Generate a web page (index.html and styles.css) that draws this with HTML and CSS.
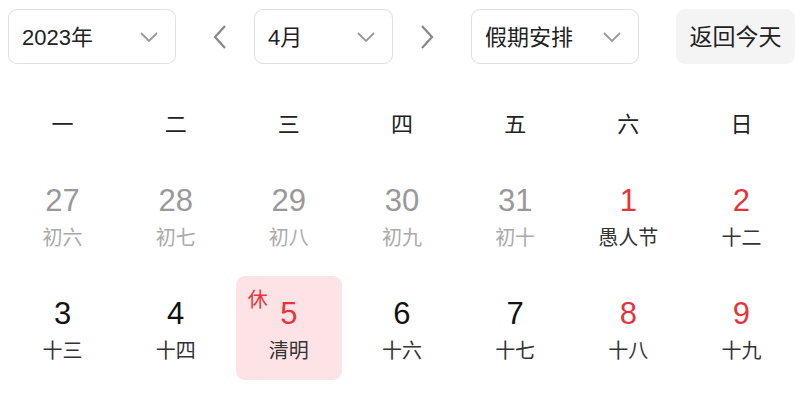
FILE: index.html
```html
<!DOCTYPE html>
<html lang="zh-CN">
<head>
    <meta charset="UTF-8">
    <meta name="viewport" content="width=device-width, initial-scale=1.0">
    <title>日历</title>
    <link rel="stylesheet" href="styles.css">
</head>
<body>

    <div class="toolbar">
        <div class="select select-year">
            <span>2023年</span>
            <svg class="chev" width="20" height="12" viewBox="0 0 20 12"><path d="M2 2 L10 10 L18 2" fill="none" stroke="#999" stroke-width="1.8"/></svg>
        </div>
        <div class="arrow arrow-prev">
            <svg width="16" height="26" viewBox="0 0 16 26"><path d="M13 2 L3 13 L13 24" fill="none" stroke="#888" stroke-width="2.2"/></svg>
        </div>
        <div class="select select-month">
            <span>4月</span>
            <svg class="chev" width="20" height="12" viewBox="0 0 20 12"><path d="M2 2 L10 10 L18 2" fill="none" stroke="#999" stroke-width="1.8"/></svg>
        </div>
        <div class="arrow arrow-next">
            <svg width="16" height="26" viewBox="0 0 16 26"><path d="M3 2 L13 13 L3 24" fill="none" stroke="#888" stroke-width="2.2"/></svg>
        </div>
        <div class="select select-holiday">
            <span>假期安排</span>
            <svg class="chev" width="20" height="12" viewBox="0 0 20 12"><path d="M2 2 L10 10 L18 2" fill="none" stroke="#999" stroke-width="1.8"/></svg>
        </div>
        <button class="today">返回今天</button>
    </div>

    <!-- 星期 -->
    <div class="week">
        <div>一</div><div>二</div><div>三</div><div>四</div><div>五</div><div>六</div><div>日</div>
    </div>

    <div class="days">
        <div class="day other"><div class="num">27</div><div class="lunar">初六</div></div>
        <div class="day other"><div class="num">28</div><div class="lunar">初七</div></div>
        <div class="day other"><div class="num">29</div><div class="lunar">初八</div></div>
        <div class="day other"><div class="num">30</div><div class="lunar">初九</div></div>
        <div class="day other"><div class="num">31</div><div class="lunar">初十</div></div>
        <div class="day weekend"><div class="num">1</div><div class="lunar">愚人节</div></div>
        <div class="day weekend"><div class="num">2</div><div class="lunar">十二</div></div>

        <div class="day"><div class="num">3</div><div class="lunar">十三</div></div>
        <div class="day"><div class="num">4</div><div class="lunar">十四</div></div>
        <div class="day holiday"><span class="rest">休</span><div class="num">5</div><div class="lunar">清明</div></div>
        <div class="day"><div class="num">6</div><div class="lunar">十六</div></div>
        <div class="day"><div class="num">7</div><div class="lunar">十七</div></div>
        <div class="day weekend"><div class="num">8</div><div class="lunar">十八</div></div>
        <div class="day weekend"><div class="num">9</div><div class="lunar">十九</div></div>
    </div>

</body>
</html>
```

FILE: styles.css
```css
body {
    font-family: "Liberation Sans", "Noto Sans CJK SC", sans-serif;
    background-color: #fff;
    color: #222;
    margin: 0;
    padding: 0;
}
.toolbar {
    display: flex;
    align-items: center;
    padding: 9px 0 0 8px;
    height: 55px;
}
.select {
    box-sizing: border-box;
    height: 55px;
    border: 1.5px solid #dcdfe6;
    border-radius: 9px;
    display: flex;
    align-items: center;
    justify-content: space-between;
    padding: 0 16px 0 13px;
    font-size: 22px;
    color: #222;
}
.select span {
    margin-top: -4px;
}
.select-year {
    width: 168px;
}
.select-month {
    width: 139px;
}
.select-holiday {
    width: 168px;
}
.arrow {
    width: 36px;
    display: flex;
    justify-content: center;
}
.arrow-prev {
    margin: 0 16px 0 26px;
}
.arrow-next {
    margin: 0 26px 0 16px;
}
.today {
    margin-left: 37px;
    width: 119px;
    height: 55px;
    border: none;
    border-radius: 9px;
    background-color: #f4f4f5;
    font-family: "Liberation Sans", "Noto Sans CJK SC", sans-serif;
    font-size: 23px;
    color: #222;
    padding: 0 0 4px;
}
.week {
    display: grid;
    grid-template-columns: repeat(7, 1fr);
    padding: 0 2px 0 6px;
    margin-top: 39px;
    height: 44px;
    line-height: 44px;
    text-align: center;
    font-size: 22px;
    color: #222;
}
.days {
    display: grid;
    grid-template-columns: repeat(7, 1fr);
    row-gap: 9px;
    padding: 0 2px 0 6px;
    margin-top: 16px;
}
.day {
    position: relative;
    margin: 0 3.5px;
    height: 104px;
    box-sizing: border-box;
    padding-top: 20px;
    border-radius: 9px;
    text-align: center;
}
.num {
    font-size: 31px;
    line-height: 36px;
    color: #111;
}
.lunar {
    margin-top: 6px;
    font-size: 20px;
    line-height: 26px;
    color: #333;
}
.other .num {
    color: #999;
}
.other .lunar {
    color: #aaa;
}
.weekend .num,
.holiday .num {
    color: #e8333b;
}
.holiday {
    background-color: #fde3e5;
}
.rest {
    position: absolute;
    left: 12px;
    top: 8px;
    font-size: 20px;
    color: #e8333b;
}
```
